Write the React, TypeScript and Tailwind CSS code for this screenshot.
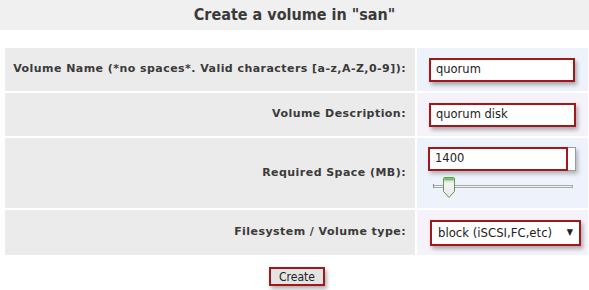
import React from "react";

const labelCls =
  "bg-[#ebebeb] flex items-center justify-end pr-[9px] text-[11px] tracking-[0.45px] font-bold text-[#3a3a3a] [font-family:'DejaVu_Sans',Verdana,sans-serif] whitespace-nowrap";

function RedInput({ value, w }: { value: string; w: number }) {
  return (
    <div
      className="h-[24px] border-2 border-[#a3161a] bg-white flex items-center pl-[5px] text-[11.5px] text-[#222] [font-family:'DejaVu_Sans',Verdana,sans-serif] shadow-[2px_3px_4px_rgba(0,0,0,0.3)]"
      style={{ width: w }}
    >
      {value}
    </div>
  );
}

export default function App() {
  return (
    <div className="w-[589px] h-[290px] bg-white overflow-hidden">
      <div className="h-[30px] bg-[#f0f0f0] flex items-center justify-center">
        <span className="text-[16px] font-bold text-[#3a3a3a] [font-family:'DejaVu_Sans_Condensed','DejaVu_Sans',sans-serif]">
          Create a volume in "san"
        </span>
      </div>
      <div className="mt-[18px] ml-[5px] grid grid-cols-[410px_171px] gap-[2px]">
        <div className={labelCls + " h-[43px]"}>
          Volume Name (*no spaces*. Valid characters [a-z,A-Z,0-9]):
        </div>
        <div className="bg-[#eef3fb] flex items-center pl-[12px]">
          <RedInput value="quorum" w={146} />
        </div>

        <div className={labelCls + " h-[43px]"}>Volume Description:</div>
        <div className="bg-[#f6f2fa] flex items-center pl-[12px]">
          <RedInput value="quorum disk" w={147} />
        </div>

        <div className={labelCls + " h-[70px]"}>Required Space (MB):</div>
        <div className="bg-[#eef3fb] flex flex-col pl-[11px] pt-[9px]">
          <div className="relative w-[148px] h-[24px]">
            <div className="absolute inset-0 border border-[#9a9a9a] bg-white shadow-[2px_3px_4px_rgba(0,0,0,0.25)]" />
            <div className="absolute left-0 top-0 w-[140px] h-[24px] border-2 border-[#a3161a] bg-white flex items-center pl-[5px] text-[11.5px] text-[#222] [font-family:'DejaVu_Sans',Verdana,sans-serif]">
              1400
            </div>
          </div>
          <div className="relative w-[140px] h-[22px] mt-[6px] ml-[5px]">
            <div className="absolute left-0 right-0 top-[8px] h-[3px] border border-[#a8a8a8] bg-[#f4f4f4]" />
            <div className="absolute left-0 top-[7px] w-[1px] h-[4px] bg-[#888]" />
            <svg className="absolute left-[10px] top-[0px]" width="12" height="21" viewBox="0 0 12 21">
              <defs>
                <linearGradient id="hg" x1="0" y1="0" x2="0" y2="1">
                  <stop offset="0" stopColor="#a9d89a" />
                  <stop offset="0.3" stopColor="#f4f4f4" />
                  <stop offset="1" stopColor="#e6e6e6" />
                </linearGradient>
              </defs>
              <path
                d="M2 0.5 H10 Q11.5 0.5 11.5 2 V14.5 L6 20.5 L0.5 14.5 V2 Q0.5 0.5 2 0.5 Z"
                fill="url(#hg)"
                stroke="#5f9a55"
                strokeWidth="1"
              />
              <rect x="1.5" y="1.3" width="9" height="2" fill="#72b865" />
            </svg>
          </div>
        </div>

        <div className={labelCls + " h-[45px]"}>Filesystem / Volume type:</div>
        <div className="bg-[#f6f2fa] flex items-center pl-[13px]">
          <div className="w-[151px] h-[26px] border-2 border-[#a3161a] bg-white flex items-center justify-between pl-[6px] pr-[6px] text-[13px] text-[#222] [font-family:'DejaVu_Sans_Condensed','DejaVu_Sans',sans-serif] shadow-[2px_3px_4px_rgba(0,0,0,0.3)]">
            <span>block (iSCSI,FC,etc)</span>
            <span className="text-[9px]">▼</span>
          </div>
        </div>
      </div>
      <div className="flex justify-center mt-[12px] pl-[5px]">
        <div className="w-[56px] h-[19px] border-2 border-[#a3161a] bg-[#e4e4e4] flex items-center justify-center text-[12px] text-[#222] [font-family:'DejaVu_Sans_Condensed','DejaVu_Sans',sans-serif] shadow-[2px_3px_4px_rgba(0,0,0,0.3)]">
          Create
        </div>
      </div>
    </div>
  );
}
